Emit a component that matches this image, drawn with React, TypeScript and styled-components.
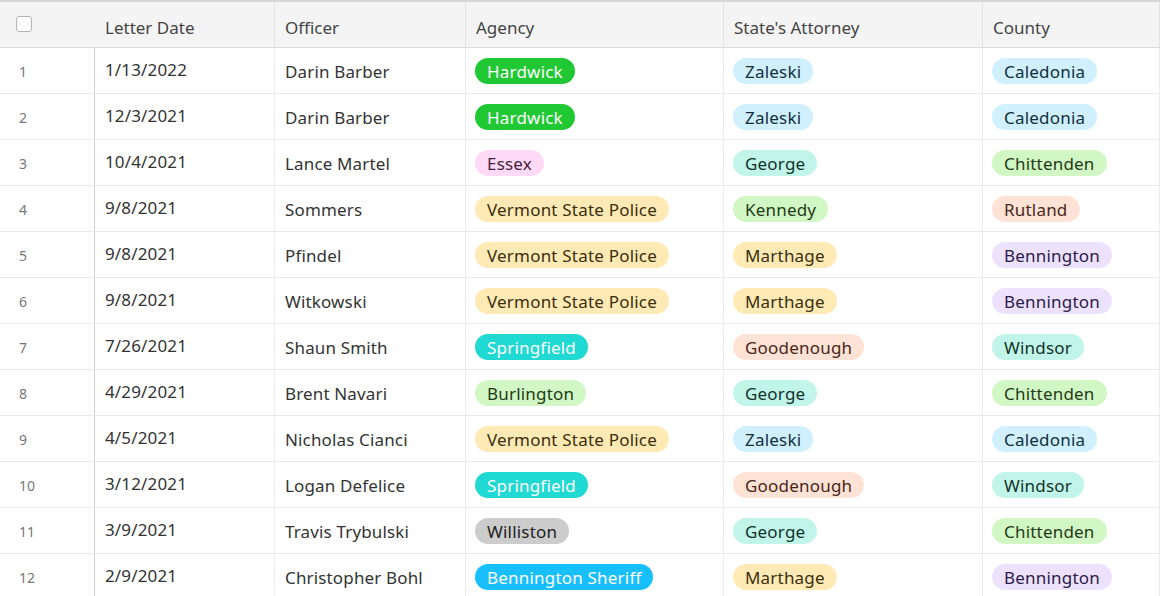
import React from "react";
import styled, { createGlobalStyle } from "styled-components";

const Global = createGlobalStyle`
  html, body { margin: 0; padding: 0; background: #fff; }
  body { font-family: "Noto Sans", "Open Sans", sans-serif; color: #333; }
`;

type Tone = { bg: string; fg: string };

const T: Record<string, Tone> = {
  green: { bg: "#20c933", fg: "#fff" },
  teal: { bg: "#20d9d2", fg: "#fff" },
  blue: { bg: "#18bfff", fg: "#fff" },
  gray: { bg: "#cccccc", fg: "#222" },
  pink: { bg: "#ffdaf6", fg: "#4a1c3f" },
  yellow: { bg: "#ffeab6", fg: "#3b2e0c" },
  lgreen: { bg: "#d1f7c4", fg: "#1f3a16" },
  lblue: { bg: "#d0f0fd", fg: "#102f3d" },
  lteal: { bg: "#c2f5e9", fg: "#11332b" },
  peach: { bg: "#fee2d5", fg: "#4a2618" },
  purple: { bg: "#ede2fe", fg: "#2b1b4a" },
};

const agency: Record<string, Tone> = {
  Hardwick: T.green,
  Essex: T.pink,
  "Vermont State Police": T.yellow,
  Springfield: T.teal,
  Burlington: T.lgreen,
  Williston: T.gray,
  "Bennington Sheriff": T.blue,
};
const attorney: Record<string, Tone> = {
  Zaleski: T.lblue,
  George: T.lteal,
  Kennedy: T.lgreen,
  Marthage: T.yellow,
  Goodenough: T.peach,
};
const county: Record<string, Tone> = {
  Caledonia: T.lblue,
  Chittenden: T.lgreen,
  Rutland: T.peach,
  Bennington: T.purple,
  Windsor: T.lteal,
};

const rows: [string, string, string, string, string][] = [
  ["1/13/2022", "Darin Barber", "Hardwick", "Zaleski", "Caledonia"],
  ["12/3/2021", "Darin Barber", "Hardwick", "Zaleski", "Caledonia"],
  ["10/4/2021", "Lance Martel", "Essex", "George", "Chittenden"],
  ["9/8/2021", "Sommers", "Vermont State Police", "Kennedy", "Rutland"],
  ["9/8/2021", "Pfindel", "Vermont State Police", "Marthage", "Bennington"],
  ["9/8/2021", "Witkowski", "Vermont State Police", "Marthage", "Bennington"],
  ["7/26/2021", "Shaun Smith", "Springfield", "Goodenough", "Windsor"],
  ["4/29/2021", "Brent Navari", "Burlington", "George", "Chittenden"],
  ["4/5/2021", "Nicholas Cianci", "Vermont State Police", "Zaleski", "Caledonia"],
  ["3/12/2021", "Logan Defelice", "Springfield", "Goodenough", "Windsor"],
  ["3/9/2021", "Travis Trybulski", "Williston", "George", "Chittenden"],
  ["2/9/2021", "Christopher Bohl", "Bennington Sheriff", "Marthage", "Bennington"],
];

const COLS = "95px 180px 191px 258px 259px 1fr";

const Page = styled.div`
  width: 1160px;
  height: 596px;
  overflow: hidden;
  border-top: 2px solid #d6d6d6;
  box-sizing: border-box;
`;

const HeaderRow = styled.div`
  display: grid;
  grid-template-columns: ${COLS};
  height: 46px;
  background: #f4f4f4;
  border-bottom: 1px solid #dcdcdc;
  box-sizing: border-box;
`;

const HeadCell = styled.div<{ $first?: boolean }>`
  display: flex;
  align-items: center;
  padding-left: ${(p) => (p.$first ? "16px" : "10px")};
  border-right: ${(p) => (p.$first ? "none" : "1px solid #e2e2e2")};
  font-size: 17px;
  color: #444;
  padding-top: 5px;
`;

const Checkbox = styled.span`
  width: 14px;
  height: 14px;
  border: 1px solid #b5b5b5;
  border-radius: 3px;
  background: #fff;
  margin-top: -6px;
`;

const Row = styled.div`
  display: grid;
  grid-template-columns: ${COLS};
  height: 46px;
  border-bottom: 1px solid #e9e9e9;
  box-sizing: border-box;
`;

const Cell = styled.div<{ $lift?: number }>`
  display: flex;
  align-items: center;
  padding-left: 10px;
  border-right: 1px solid #ececec;
  font-size: 17px;
  letter-spacing: 0.15px;
  color: #333;
  white-space: nowrap;
  overflow: hidden;
  padding-top: 2px;
  padding-bottom: ${(p) => p.$lift ?? 0}px;
`;

const NumCell = styled.div`
  display: flex;
  align-items: center;
  padding-left: 19px;
  border-right: 1px solid #cfcfcf;
  font-size: 14px;
  color: #777;
  padding-top: 1px;
`;

const TagCell = styled.div`
  display: flex;
  align-items: center;
  padding-left: 9px;
  border-right: 1px solid #ececec;
`;

const Tag = styled.span<{ $bg: string; $fg: string }>`
  display: inline-flex;
  align-items: center;
  height: 26px;
  padding: 2px 12px 0;
  border-radius: 13px;
  background: ${(p) => p.$bg};
  color: ${(p) => p.$fg};
  font-size: 17px;
  letter-spacing: 0.2px;
  line-height: 1;
  box-sizing: border-box;
  white-space: nowrap;
`;

const Pill = ({ label, tone }: { label: string; tone: Tone }) => (
  <Tag $bg={tone.bg} $fg={tone.fg}>{label}</Tag>
);

export default function App() {
  return (
    <>
      <Global />
      <Page>
        <HeaderRow>
          <HeadCell $first>
            <Checkbox />
          </HeadCell>
          <HeadCell>Letter Date</HeadCell>
          <HeadCell>Officer</HeadCell>
          <HeadCell>Agency</HeadCell>
          <HeadCell>State's Attorney</HeadCell>
          <HeadCell>County</HeadCell>
        </HeaderRow>
        {rows.map(([date, officer, ag, att, co], i) => (
          <Row key={i}>
            <NumCell>{i + 1}</NumCell>
            <Cell $lift={4}>{date}</Cell>
            <Cell>{officer}</Cell>
            <TagCell>
              <Pill label={ag} tone={agency[ag]} />
            </TagCell>
            <TagCell>
              <Pill label={att} tone={attorney[att]} />
            </TagCell>
            <TagCell>
              <Pill label={co} tone={county[co]} />
            </TagCell>
          </Row>
        ))}
      </Page>
    </>
  );
}
